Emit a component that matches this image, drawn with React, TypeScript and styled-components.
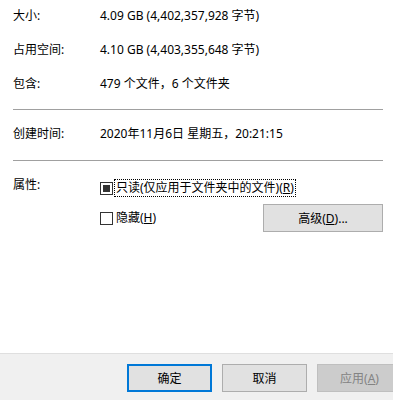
import styled, { createGlobalStyle } from "styled-components";

const GlobalStyle = createGlobalStyle`
  *, *::before, *::after {
    box-sizing: border-box;
  }
  html, body {
    margin: 0;
    padding: 0;
    background: #ffffff;
  }
  body {
    font-family: "Segoe UI", "Noto Sans", "Noto Sans CJK SC", sans-serif;
    font-size: 12px;
    color: #000;
  }
`;

const Dialog = styled.div`
  width: 393px;
  height: 400px;
  display: flex;
  flex-direction: column;
  overflow: hidden;
`;

const Body = styled.div`
  flex: 1;
  padding: 6px 10px 0 13px;
  display: flex;
  flex-direction: column;
`;

const Section = styled.div<{ $gap?: number }>`
  display: flex;
  flex-direction: column;
  gap: ${(p) => p.$gap ?? 14}px;
`;

const Row = styled.div`
  display: grid;
  grid-template-columns: 87px 1fr;
  height: 20px;
  line-height: 20px;
  white-space: nowrap;
`;

const Label = styled.span``;

const Value = styled.span``;

const Separator = styled.hr<{ $top: number; $bottom: number }>`
  border: none;
  height: 1px;
  background: #a0a0a0;
  margin: ${(p) => p.$top}px 0 ${(p) => p.$bottom}px 0;
`;

const AttrGrid = styled.div`
  display: grid;
  grid-template-columns: 87px 1fr;
`;

const AttrLabel = styled.div`
  height: 20px;
  line-height: 20px;
`;

const AttrOptions = styled.div`
  display: flex;
  flex-direction: column;
  padding-top: 4px;
`;

const CheckRow = styled.div`
  display: flex;
  align-items: center;
  height: 18px;
  white-space: nowrap;
`;

const SecondRow = styled.div`
  display: flex;
  align-items: center;
  justify-content: space-between;
  margin-top: 7px;
`;

const Box = styled.span<{ $checked?: boolean }>`
  width: 13px;
  height: 13px;
  border: 1px solid #333;
  background: #fff;
  display: flex;
  align-items: center;
  justify-content: center;
  flex-shrink: 0;
  &::after {
    content: "";
    width: 7px;
    height: 7px;
    background: ${(p) => (p.$checked ? "#333" : "transparent")};
  }
`;

const CheckText = styled.span<{ $focused?: boolean }>`
  margin-left: 1px;
  padding: 0 1px;
  height: 18px;
  line-height: 16px;
  border: 1px dotted ${(p) => (p.$focused ? "#000" : "transparent")};
`;

const Button = styled.button<{ $variant?: "default" | "primary" | "disabled" }>`
  width: 85px;
  height: 28px;
  flex-shrink: 0;
  font: inherit;
  padding: 0;
  color: ${(p) => (p.$variant === "disabled" ? "#838383" : "#000")};
  background: ${(p) => (p.$variant === "disabled" ? "#cccccc" : "#e1e1e1")};
  border: ${(p) =>
    p.$variant === "primary"
      ? "2px solid #0078d7"
      : p.$variant === "disabled"
      ? "1px solid #bfbfbf"
      : "1px solid #adadad"};
`;

const WideButton = styled(Button)`
  width: 120px;
  height: 28px;
`;

const Footer = styled.div`
  height: 47px;
  flex-shrink: 0;
  background: #f0f0f0;
  border-top: 1px solid #dfdfdf;
  display: flex;
  gap: 10px;
  padding: 10px 0 0 127px;
  overflow: hidden;
`;

const App = () => {
  return (
    <>
      <GlobalStyle />
      <Dialog>
        <Body>
          <Section>
            <Row>
              <Label>大小:</Label>
              <Value>4.09 GB (4,402,357,928 字节)</Value>
            </Row>
            <Row>
              <Label>占用空间:</Label>
              <Value>4.10 GB (4,403,355,648 字节)</Value>
            </Row>
            <Row>
              <Label>包含:</Label>
              <Value>479 个文件，6 个文件夹</Value>
            </Row>
          </Section>
          <Separator $top={15} $bottom={14} />
          <Row>
            <Label>创建时间:</Label>
            <Value>2020年11月6日 星期五，20:21:15</Value>
          </Row>
          <Separator $top={16} $bottom={14} />
          <AttrGrid>
            <AttrLabel>属性:</AttrLabel>
            <AttrOptions>
              <CheckRow>
                <Box $checked />
                <CheckText $focused>
                  只读(仅应用于文件夹中的文件)(<u>R</u>)
                </CheckText>
              </CheckRow>
              <SecondRow>
                <CheckRow>
                  <Box />
                  <CheckText>
                    隐藏(<u>H</u>)
                  </CheckText>
                </CheckRow>
                <WideButton>
                  高级(<u>D</u>)...
                </WideButton>
              </SecondRow>
            </AttrOptions>
          </AttrGrid>
        </Body>
        <Footer>
          <Button $variant="primary">确定</Button>
          <Button>取消</Button>
          <Button $variant="disabled">
            应用(<u>A</u>)
          </Button>
        </Footer>
      </Dialog>
    </>
  );
};

export default App;
